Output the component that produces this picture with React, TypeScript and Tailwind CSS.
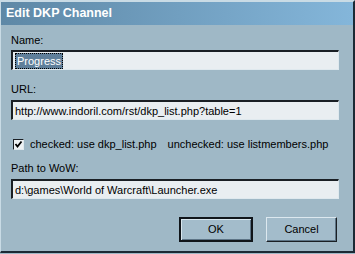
import React from 'react';

const font = { fontFamily: '"Liberation Sans", Arial, sans-serif' };

const Field: React.FC<{ value: string; selected?: boolean }> = ({ value, selected }) => (
  <div className="h-[20px] w-[328px] border-t-2 border-l-2 border-t-[#1a1f24] border-l-[#1a1f24] border-b border-r border-b-[#dfe9ee] border-r-[#dfe9ee] bg-[#e9eef1] flex items-center pl-[2px] text-[11px] text-black">
    {selected ? (
      <span className="bg-[#5f7f9a] text-white leading-[14px] px-[1px] border border-dotted border-black">{value}</span>
    ) : (
      <span className="leading-[14px]">{value}</span>
    )}
  </div>
);

const Button: React.FC<{ label: string; primary?: boolean }> = ({ label, primary }) => (
  <div
    className={`flex items-center justify-center text-[11px] text-black bg-[#a3bccb] ${
      primary
        ? 'w-[74px] h-[25px] border-2 border-t-[#10151a] border-l-[#10151a] border-b-[#10151a] border-r-[#10151a] shadow-[inset_1px_1px_0_#d8e6ee,inset_-1px_-1px_0_#5d7486]'
        : 'w-[71px] h-[25px] border border-t-[#dce8ef] border-l-[#dce8ef] border-b-[#1a1f24] border-r-[#1a1f24] shadow-[inset_-1px_-1px_0_#5d7486]'
    }`}
  >
    {label}
  </div>
);

export default function App() {
  return (
    <div className="w-[355px] h-[254px] bg-[#9fb8c6]" style={font}>
      <div className="w-[355px] h-[253px] border-t-2 border-l border-t-[#c9dbe5] border-l-[#c9dbe5] border-r-2 border-b-2 border-r-[#1b2a35] border-b-[#1b2a35] flex flex-col">
        <div className="h-[23px] bg-gradient-to-r from-[#5e88a6] to-[#84b6da] flex items-center pl-[5px]">
          <span className="text-white font-bold text-[12.5px]">Edit DKP Channel</span>
        </div>
        <div className="flex flex-col pl-[10px] text-[11px] text-black">
          <div className="mt-[9px] h-[13px] leading-[13px]">Name:</div>
          <div className="mt-[3px]">
            <Field value="Progress" selected />
          </div>
          <div className="mt-[13px] h-[13px] leading-[13px]">URL:</div>
          <div className="mt-[4px]">
            <Field value="http://www.indoril.com/rst/dkp_list.php?table=1" />
          </div>
          <div className="mt-[19px] h-[11px] flex items-center">
            <div className="w-[11px] h-[11px] ml-[2px] bg-[#eef2f4] border-t border-l border-t-[#1a1f24] border-l-[#1a1f24] border-b border-r border-b-[#dfe9ee] border-r-[#dfe9ee] flex items-center justify-center">
              <svg width="9" height="9" viewBox="0 0 9 9">
                <path d="M1.5 4 L3.5 6.5 L7.5 1.5" stroke="#000" strokeWidth="1.8" fill="none" />
              </svg>
            </div>
            <span className="ml-[6px]">checked: use dkp_list.php</span>
            <span className="ml-[11px]">unchecked: use listmembers.php</span>
          </div>
          <div className="mt-[12px] h-[13px] leading-[13px]">Path to WoW:</div>
          <div className="mt-[4px]">
            <Field value="d:\games\World of Warcraft\Launcher.exe" />
          </div>
          <div className="mt-[18px] flex pl-[168px] gap-[13px]">
            <Button label="OK" primary />
            <Button label="Cancel" />
          </div>
        </div>
      </div>
    </div>
  );
}
